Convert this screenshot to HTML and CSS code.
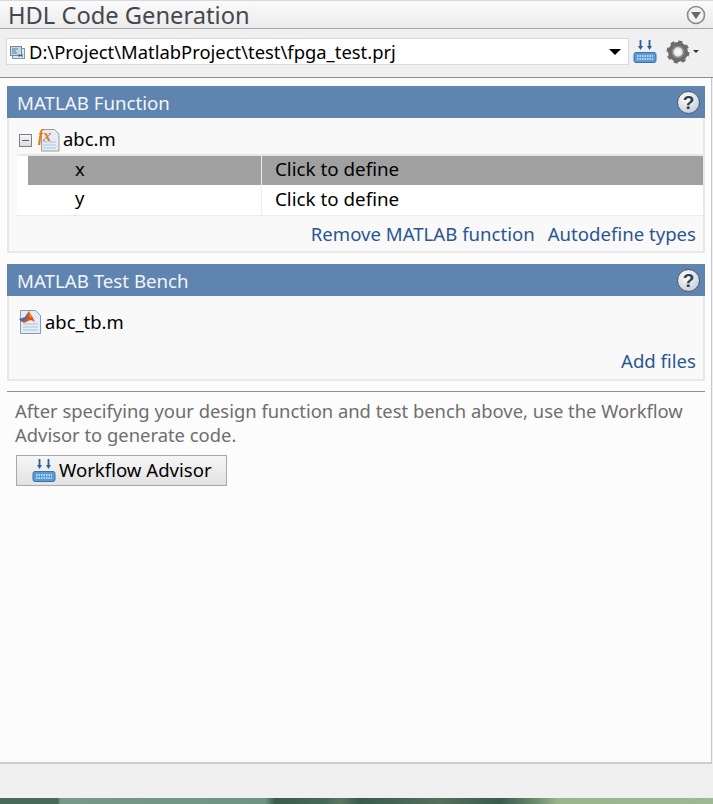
FILE: index.html
```html
<!DOCTYPE html>
<html>

<head>
    <meta charset="UTF-8">
    <title>HDL Code Generation</title>
    <link rel="stylesheet" href="styles.css">
</head>

<body>
    <div class="window">
        <div class="titlebar">
            <span class="title">HDL Code Generation</span>
            <svg class="collapse" width="20" height="20" viewBox="0 0 20 20">
                <circle cx="10" cy="10" r="8.500" fill="#f2f2f2" stroke="#8a8a8a" stroke-width="1.600" />
                <path d="M5 7h10l-5 7z" fill="#666" />
            </svg>
        </div>
        <div class="toolbar">
            <div class="combo">
                <svg class="prj-icon" width="17" height="16" viewBox="0 0 17 16">
                    <rect x="3.500" y="4.500" width="12" height="10" fill="#dbe6ef" stroke="#7f95a8" />
                    <rect x="1.500" y="2.500" width="11" height="9" fill="#c4d8e8" stroke="#6f8ba3" />
                    <path d="M3 5h6M3 7h4M3 9h5" stroke="#5d7c96" />
                    <path d="M10 10v3M13 10v3M10 11.500h3" stroke="#3c5a74" />
                </svg>
                <span class="combo-text">D:\Project\MatlabProject\test\fpga_test.prj</span>
                <span class="combo-arrow"></span>
            </div>
            <svg class="build" width="24" height="24" viewBox="0 0 24 24">
                <path d="M7.500 0v7M16.500 0v7" stroke="#2c5f96" stroke-width="1.800" />
                <path d="M5 6h5L7.500 10zM14 6h5l-2.500 4z" fill="#2c5f96" />
                <rect x="1" y="12.500" width="22" height="10" rx="2" fill="#5b9bd5" stroke="#3a74ad" />
                <path d="M4 16h16M4 19h16" stroke="#dcecf8" stroke-width="1.600" stroke-dasharray="1.500 1" />
            </svg>
            <svg class="gear" width="24" height="24" viewBox="0 0 24 24">
                <circle cx="12" cy="12" r="8" fill="none" stroke="#6c6c6c" stroke-width="4" />
                <circle cx="12" cy="12" r="10" fill="none" stroke="#6c6c6c" stroke-width="3" stroke-dasharray="4 3.850" />
                <circle cx="12" cy="12" r="5.500" fill="#e4e4e4" stroke="#8a8a8a" stroke-width="1.500" />
                <circle cx="12" cy="12" r="3" fill="#f4f4f4" />
            </svg>
            <span class="gear-arrow"></span>
        </div>

        <div class="content">
            <section class="panel">
                <div class="panel-head">
                    <span>MATLAB Function</span>
                    <span class="help">?</span>
                </div>
                <div class="panel-body fn-body">
                    <div class="tree-row">
                        <span class="minus"></span>
                        <svg width="24" height="25" viewBox="0 0 24 25">
                            <path d="M5.500 2.500h13l4.500 4.500v17H5.500z" fill="#e4edf7" stroke="#a89a86" />
                            <path d="M7 15h13M7 18h13M7 21h13" stroke="#aec3da" />
                            <text x="2" y="14" class="fx">fx</text>
                        </svg>
                        <span class="file-name">abc.m</span>
                    </div>
                    <div class="param-table">
                        <div class="gutter"></div>
                        <div class="param-rows">
                            <div class="param selected">
                                <div class="param-name">x</div>
                                <div class="param-type">Click to define</div>
                            </div>
                            <div class="param">
                                <div class="param-name">y</div>
                                <div class="param-type">Click to define</div>
                            </div>
                        </div>
                    </div>
                    <div class="links">
                        <a>Remove MATLAB function</a>
                        <a>Autodefine types</a>
                    </div>
                </div>
            </section>

            <section class="panel">
                <div class="panel-head">
                    <span>MATLAB Test Bench</span>
                    <span class="help">?</span>
                </div>
                <div class="panel-body tb-body">
                    <div class="tree-row tb-row">
                        <svg width="24" height="26" viewBox="0 0 24 26">
                            <path d="M2.500 1.500h15l5 5v18h-20z" fill="#e4edf7" stroke="#8f98a8" />
                            <path d="M5 15h15M5 18h15M5 21h15" stroke="#aec3da" />
                            <path d="M2 11l5-2 4-7 3 5 3 6-4-2-3 1-4 2z" fill="#d9531e" />
                            <path d="M1 10l6-2 3-5-2 7-4 3z" fill="#3f6fb0" />
                            <path d="M11 2l3 5-2 2z" fill="#f0a020" />
                        </svg>
                        <span class="file-name">abc_tb.m</span>
                    </div>
                    <div class="links">
                        <a>Add files</a>
                    </div>
                </div>
            </section>

            <div class="info">
                <p>After specifying your design function and test bench above, use the Workflow Advisor to generate code.</p>
                <button class="advisor">
                    <svg width="24" height="24" viewBox="0 0 24 24">
                        <path d="M7.500 0v7M16.500 0v7" stroke="#2c5f96" stroke-width="1.800" />
                        <path d="M5 6h5L7.500 10zM14 6h5l-2.500 4z" fill="#2c5f96" />
                        <rect x="1" y="12.500" width="22" height="10" rx="2" fill="#5b9bd5" stroke="#3a74ad" />
                        <path d="M4 16h16M4 19h16" stroke="#dcecf8" stroke-width="1.600" stroke-dasharray="1.500 1" />
                    </svg>
                    <span class="advisor-label">Workflow Advisor</span>
                </button>
            </div>
        </div>

        <div class="statusbar"></div>
        <div class="desktop"></div>
    </div>
</body>

</html>
```
FILE: styles.css
```css
* {
    box-sizing: border-box;
}

html,
body {
    margin: 0;
    height: 100%;
}

body {
    font-family: "Noto Sans", "Open Sans", sans-serif;
    font-size: 18.400px;
    color: #000;
    overflow: hidden;
}

.window {
    width: 713px;
    height: 804px;
    display: flex;
    flex-direction: column;
    background-color: #f0f0f0;
}

.titlebar {
    height: 29px;
    padding: 0 8px;
    display: flex;
    align-items: center;
    justify-content: space-between;
    border-top: 1px solid #d8d8d8;
    border-bottom: 1px solid #a6a6a6;
    background: linear-gradient(#fafafa, #ececec);
}

.title {
    font-size: 23.700px;
    color: #44484e;
}

.collapse {
    margin-right: -1px;
}

.toolbar {
    height: 49px;
    padding: 0 4px 3px 6px;
    display: flex;
    align-items: center;
    border-bottom: 1px solid #8c8c8c;
    background-color: #f0f0f0;
}

.combo {
    width: 623px;
    height: 27px;
    padding: 0 5px 0 2px;
    display: flex;
    align-items: center;
    background-color: #fff;
    border: 1px solid #d9d9d9;
}

.prj-icon {
    margin-right: 3px;
}

.combo-text {
    flex: 1;
}

.combo-arrow {
    width: 0;
    height: 0;
    margin-right: 2px;
    border-left: 6px solid transparent;
    border-right: 6px solid transparent;
    border-top: 6px solid #000;
}

.build {
    margin-left: 4px;
}

.gear {
    margin-left: 9px;
}

.gear-arrow {
    width: 0;
    height: 0;
    margin-left: 3px;
    border-left: 3px solid transparent;
    border-right: 3px solid transparent;
    border-top: 3px solid #333;
}

.content {
    flex: 1;
    margin-right: 1px;
    padding: 8px 1px 0 7px;
    background-color: #fcfcfc;
    border-right: 1px solid #c8c8c8;
    border-bottom: 2px solid #cdcdcd;
}

.panel {
    width: 698px;
    margin-bottom: 11px;
}

.panel-head {
    height: 32px;
    padding: 0 5px 0 10px;
    display: flex;
    align-items: center;
    justify-content: space-between;
    font-size: 18.700px;
    background-color: #5e84af;
    color: #f2f5f9;
}

.help {
    width: 23px;
    height: 23px;
    font-family: "Liberation Sans", sans-serif;
    font-size: 19px;
    font-weight: bold;
    line-height: 22px;
    text-align: center;
    color: #2f3d4c;
    border-radius: 50%;
    border: 1px solid #4c5c6c;
    background: radial-gradient(circle at 40% 30%, #ffffff, #b8c2cc);
}

.panel-body {
    background-color: #f9f9f9;
    border: 2px solid #e8e8e8;
    border-top: 0;
}

.fn-body {
    height: 135px;
    padding: 7px 0 0 8px;
}

.tb-body {
    height: 85px;
    padding: 12px 0 0 9px;
}

.tree-row {
    height: 28px;
    display: flex;
    align-items: center;
}

.tree-row svg {
    margin-right: 3px;
}

.file-name {
    margin-top: -2px;
}

.tb-row {
    margin-bottom: 7px;
}

.minus {
    width: 13px;
    height: 13px;
    margin: 2px 4px 0 2px;
    border: 1px solid #7f7f7f;
    background: linear-gradient(#f6f6f6, #dcdcdc);
    position: relative;
}

.minus::after {
    content: "";
    position: absolute;
    left: 2px;
    right: 2px;
    top: 5px;
    height: 1px;
    background-color: #3c5f86;
}

.fx {
    font-family: "Liberation Serif", serif;
    font-size: 16px;
    font-style: italic;
    font-weight: bold;
    fill: #e07b18;
}

.param-table {
    display: flex;
    margin-top: 1px;
    border-top: 2px solid #e8e8e8;
    border-bottom: 1px solid #ececec;
}

.gutter {
    width: 11px;
    background-color: #fff;
}

.param-rows {
    flex: 1;
}

.param {
    height: 29px;
    display: flex;
    align-items: center;
    background-color: #fff;
}

.param.selected {
    background-color: #a0a0a0;
}

.param + .param {
    height: 30px;
}

.param-name {
    width: 234px;
    height: 100%;
    padding-left: 47px;
    line-height: 26px;
    border-right: 1px solid #ececec;
}

.param-type {
    padding-left: 13px;
    font-size: 18.800px;
    margin-top: -2px;
}

.selected .param-type {
    margin-top: -3px;
}

.links {
    padding: 5px 7px 0 0;
    display: flex;
    justify-content: flex-end;
    gap: 13px;
    font-size: 18.600px;
    color: #2a5692;
}

.info {
    padding: 7px 0 0 8px;
    margin-top: -1px;
    border-top: 1px solid #8f8f8f;
    width: 698px;
}

.info p {
    margin: 0 0 8px 0;
    line-height: 24px;
    color: #6e6e6e;
}

.advisor {
    width: 211px;
    height: 31px;
    margin-left: 1px;
    padding: 0 0 0 15px;
    display: flex;
    align-items: center;
    gap: 3px;
    font: inherit;
    font-size: 18.600px;
    color: #000;
    border: 1px solid #a8a8a8;
    background: linear-gradient(#f6f6f6, #e2e2e2);
}

.advisor-label {
    margin-top: -2px;
}

.statusbar {
    height: 34px;
    background-color: #f0f0f0;
}

.desktop {
    height: 6px;
    background: linear-gradient(90deg, #4a6a58 0, #4a6a58 58px, #77998a 60px, #6f9484 265px, #3c5c4c 275px, #466a58 325px, #5a7660 340px, #3a5c4e 360px, #54705a 440px, #3a5c4e 500px, #6a8a6c 535px, #9ab58e 558px, #9db892 713px);
}
```
